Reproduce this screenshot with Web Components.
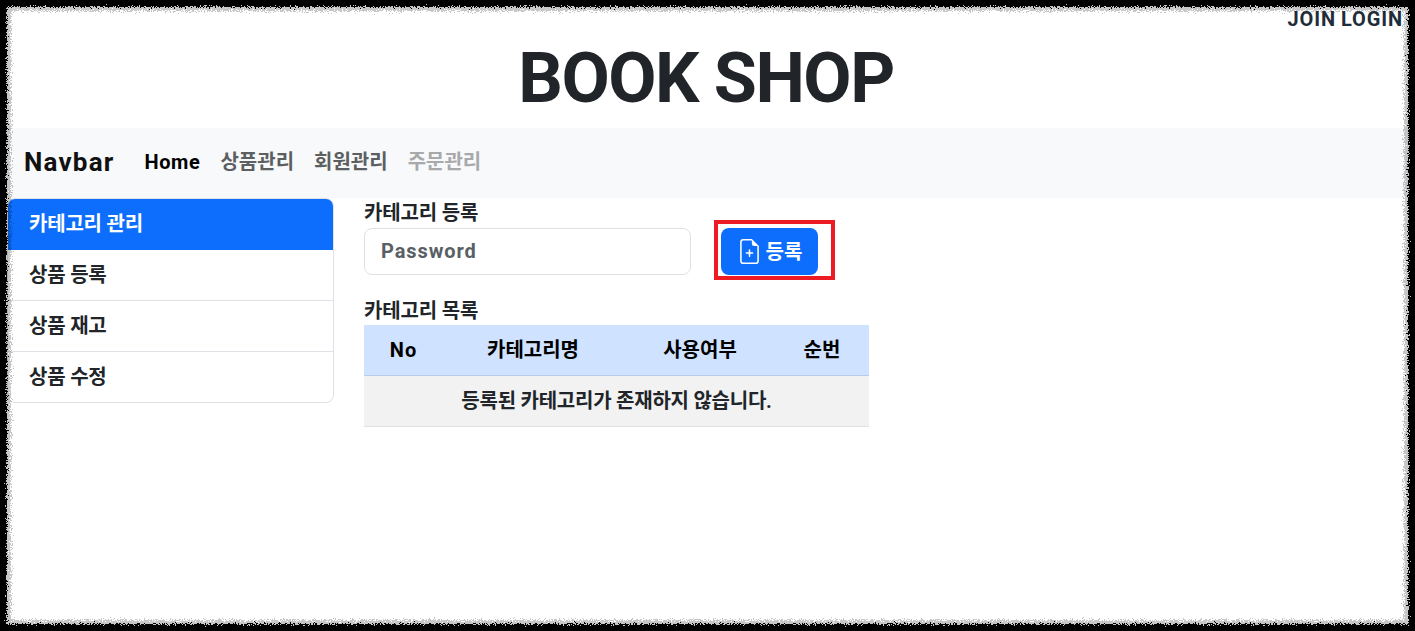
<!DOCTYPE html>
<html lang="ko">
<head>
<meta charset="utf-8">
<title>BOOK SHOP</title>
<style>
html, body { margin: 0; height: 100%; background: #fff; overflow: hidden; }
body { font-family: Roboto, "Noto Sans CJK KR", sans-serif; color: #212529; }
</style>
</head>
<body>
<rough-frame></rough-frame>
<shop-header></shop-header>
<shop-navbar></shop-navbar>
<shop-page>
  <side-menu slot="side"></side-menu>
  <category-form></category-form>
  <category-table></category-table>
</shop-page>

<script>
class RoughFrame extends HTMLElement {
    constructor() {
        super();
        this.attachShadow({mode:'open'});
        this.shadowRoot.innerHTML = `
<style>
:host { position: fixed; inset: 0; z-index: 10; pointer-events: none; display: block; }
svg { position: absolute; width: 0; height: 0; }
.edge {
    position: absolute;
    inset: -12px;
    border: 19px solid #000;
    border-radius: 18px;
    filter: url(#rough);
}
.fringe {
    position: absolute;
    inset: -12px;
    border: 23px solid rgba(0,0,0,.22);
    border-radius: 20px;
    filter: url(#rough2);
}
</style>
<svg aria-hidden="true">
<filter id="rough" x="0" y="0" width="100%" height="100%">
  <feTurbulence type="fractalNoise" baseFrequency="0.8" numOctaves="2" seed="4"/>
  <feDisplacementMap in="SourceGraphic" scale="8" xChannelSelector="R" yChannelSelector="G"/>
  <feGaussianBlur stdDeviation="0.4"/>
</filter>
<filter id="rough2" x="0" y="0" width="100%" height="100%">
  <feTurbulence type="fractalNoise" baseFrequency="0.9" numOctaves="2" seed="9"/>
  <feDisplacementMap in="SourceGraphic" scale="10" xChannelSelector="G" yChannelSelector="R"/>
  <feGaussianBlur stdDeviation="0.4"/>
</filter>
</svg>
<div class="fringe"></div>
<div class="edge"></div>`;
    }
}

class ShopHeader extends HTMLElement {
    constructor() {
        super();
        this.attachShadow({mode:'open'});
        this.shadowRoot.innerHTML = `
<style>
:host { display: block; height: 128px; position: relative; font-weight: 700; }
.auth { display: flex; justify-content: flex-end; gap: 5px; padding: 7px 12px 0 0; font-size: 20px; line-height: 24px; color: #1f2d3a; letter-spacing: .9px; }
h1 { margin: 0; padding-top: 5px; text-align: center; font-size: 70px; line-height: 84px; font-weight: 700; letter-spacing: -1.5px; padding-right: 3px; color: #212529; }
</style>
<div class="auth"><span>JOIN</span><span>LOGIN</span></div>
<h1>BOOK SHOP</h1>`;
    }
}

class ShopNavbar extends HTMLElement {
    constructor() {
        super();
        this.attachShadow({mode:'open'});
        this.shadowRoot.innerHTML = `
<style>
:host { display: flex; align-items: flex-start; height: 70px; background: #f8f9fa; padding: 18px 0 0 24px; font-weight: 700; box-sizing: border-box; }
.brand { font-size: 26px; line-height: 32px; color: #111; margin-right: 30px; letter-spacing: 1.2px; }
nav { display: flex; align-items: baseline; gap: 20px; font-size: 20px; line-height: 28px; color: #5c5f62; margin-top: 2px; }
.on { color: #000; letter-spacing: .6px; }
.off { color: #a7a9ab; }
</style>
<span class="brand">Navbar</span>
<nav><span class="on">Home</span><span>상품관리</span><span>회원관리</span><span class="off">주문관리</span></nav>`;
    }
}

class ShopPage extends HTMLElement {
    constructor() {
        super();
        this.attachShadow({mode:'open'});
        this.shadowRoot.innerHTML = `
<style>
:host { display: flex; gap: 30px; padding-left: 7px; align-items: flex-start; }
.side { width: 327px; flex: none; }
.main { width: 505px; flex: none; }
</style>
<div class="side"><slot name="side"></slot></div>
<div class="main"><slot></slot></div>`;
    }
}

class SideMenu extends HTMLElement {
    constructor() {
        super();
        this.attachShadow({mode:'open'});
        this.shadowRoot.innerHTML = `
<style>
:host { display: block; font-size: 20px; font-weight: 700; letter-spacing: -.2px; }
ul { margin: 0; padding: 0; list-style: none; border: 1px solid #dee2e6; border-radius: 8px; overflow: hidden; }
li { height: 50px; line-height: 51px; padding-left: 21px; border-top: 1px solid #dee2e6; color: #212529; }
li:first-child { border-top: 0; height: 52px; line-height: 52px; background: #0d6efd; color: #fff; margin: -1px -1px 0; padding-left: 22px; }
li:nth-child(2) { border-top: 0; }
</style>
<ul><li>카테고리 관리</li><li>상품 등록</li><li>상품 재고</li><li>상품 수정</li></ul>`;
    }
}

class CategoryForm extends HTMLElement {
    constructor() {
        super();
        this.attachShadow({mode:'open'});
        this.shadowRoot.innerHTML = `
<style>
:host { display: block; font-weight: 700; }
.label { display: block; font-size: 20px; line-height: 24px; padding-top: 3px; color: #212529; letter-spacing: -.15px; }
.row { display: flex; align-items: flex-start; margin-top: -5px; }
.field { box-sizing: border-box; width: 327px; height: 47px; margin-top: 8px; border: 1px solid #dee2e6; border-radius: 8px; padding-left: 16px; line-height: 44px; font-size: 20px; letter-spacing: .9px; color: #595f65; }
.mark { display: flex; margin-left: 23px; border: 4px solid #ed1c24; padding: 4px 13px 1px 3px; height: 60px; box-sizing: border-box; }
button { display: flex; align-items: center; justify-content: center; gap: 4px; width: 97px; height: 47px; border: 0; border-radius: 8px; background: #0d6efd; color: #fff; font: inherit; font-size: 20px; padding: 0 0 1px; }
button span { margin-bottom: 2px; }
svg { width: 25px; height: 25px; }
</style>
<span class="label">카테고리 등록</span>
<div class="row">
  <div class="field">Password</div>
  <div class="mark"><button>
    <svg viewBox="0 0 16 16" fill="#fff"><path d="M8 6.5a.5.5 0 0 1 .5.5v1.5H10a.5.5 0 0 1 0 1H8.5V11a.5.5 0 0 1-1 0V9.5H6a.5.5 0 0 1 0-1h1.5V7a.5.5 0 0 1 .5-.5"/><path d="M14 4.5V14a2 2 0 0 1-2 2H4a2 2 0 0 1-2-2V2a2 2 0 0 1 2-2h5.5zm-3 0A1.5 1.5 0 0 1 9.5 3V1H4a1 1 0 0 0-1 1v12a1 1 0 0 0 1 1h8a1 1 0 0 0 1-1V4.5z"/></svg>
    <span>등록</span></button></div>
</div>`;
    }
}

class CategoryTable extends HTMLElement {
    constructor() {
        super();
        this.attachShadow({mode:'open'});
        this.shadowRoot.innerHTML = `
<style>
:host { display: block; font-weight: 700; margin-top: 19px; }
.label { display: block; font-size: 20px; line-height: 24px; margin-bottom: 2px; color: #212529; letter-spacing: -.15px; }
.head { display: grid; grid-template-columns: 79px 180px 154px 90px; height: 51px; box-sizing: border-box; background: #cfe2ff; border-bottom: 1px solid #b6cdee; color: #000; font-size: 20px; line-height: 50px; text-align: center; }
.no { letter-spacing: 1px; }
.empty { height: 51px; box-sizing: border-box; background: #f2f2f2; border-bottom: 1px solid #dee2e6; font-size: 20px; line-height: 50px; text-align: center; color: #212529; letter-spacing: -.24px; }
</style>
<span class="label">카테고리 목록</span>
<div class="head"><span class="no">No</span><span>카테고리명</span><span>사용여부</span><span>순번</span></div>
<div class="empty">등록된 카테고리가 존재하지 않습니다.</div>`;
    }
}

customElements.define('rough-frame', RoughFrame);
customElements.define('shop-header', ShopHeader);
customElements.define('shop-navbar', ShopNavbar);
customElements.define('shop-page', ShopPage);
customElements.define('side-menu', SideMenu);
customElements.define('category-form', CategoryForm);
customElements.define('category-table', CategoryTable);
</script>
</body>
</html>
